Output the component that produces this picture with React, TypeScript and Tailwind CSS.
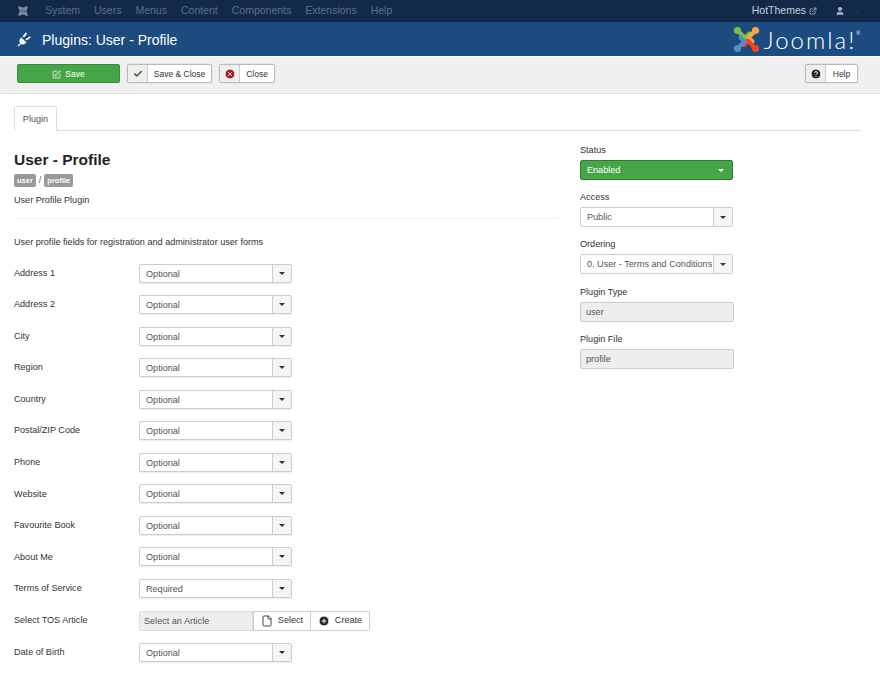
import { ChevronDown, ExternalLink, User, SquarePen, Check, CircleX, CircleHelp, File, CirclePlus } from 'lucide-react';

const NAV = ['System', 'Users', 'Menus', 'Content', 'Components', 'Extensions', 'Help'];

const FIELDS = [
  ['Address 1', 'Optional'],
  ['Address 2', 'Optional'],
  ['City', 'Optional'],
  ['Region', 'Optional'],
  ['Country', 'Optional'],
  ['Postal/ZIP Code', 'Optional'],
  ['Phone', 'Optional'],
  ['Website', 'Optional'],
  ['Favourite Book', 'Optional'],
  ['About Me', 'Optional'],
  ['Terms of Service', 'Required'],
];

function Caret({ className = 'border-t-[#333]' }: { className?: string }) {
  return <span className={`w-0 h-0 border-x-[3px] border-x-transparent border-t-[3px] ${className}`} />;
}

function JoomlaMark() {
  return (
    <svg width="27" height="27" viewBox="0 0 27 27" fill="none" strokeWidth="4.2" strokeLinecap="round" strokeLinejoin="round">
      <path d="M4.5 4.5 L12 12 L16.5 7.5" stroke="#7ac143" />
      <path d="M22.5 4.5 L15.5 11.5 L19.5 15.5" stroke="#f9a541" />
      <path d="M22.5 22.5 L15 15 L11 19" stroke="#f44321" />
      <path d="M4.5 22.5 L11.5 15.5 L7.5 11.5" stroke="#5091cd" />
      <circle cx="4.5" cy="4.5" r="3.6" fill="#7ac143" />
      <circle cx="22.5" cy="4.5" r="3.6" fill="#f9a541" />
      <circle cx="22.5" cy="22.5" r="3.6" fill="#f44321" />
      <circle cx="4.5" cy="22.5" r="3.6" fill="#5091cd" />
    </svg>
  );
}

function JoomlaSmall() {
  return (
    <svg width="12" height="12" viewBox="0 0 27 27" fill="none" stroke="#7f8da5" strokeWidth="3.6" strokeLinecap="round" strokeLinejoin="round">
      <path d="M4.5 4.5 L13.5 8 L22.5 4.5 L19 13.5 L22.5 22.5 L13.5 19 L4.5 22.5 L8 13.5 Z" />
      <path d="M8 8 L19 19 M19 8 L8 19" />
    </svg>
  );
}

function PlugIcon() {
  return (
    <svg width="15" height="16" viewBox="0 0 15 16" fill="white">
      <path d="M0.6 14.6 L3 12.2 C1.9 10.2 2.4 8.6 3.6 7.2 L4.4 6.4 L9.4 11.4 L8.6 12.2 C7 13.6 5.4 13.9 3.9 13.1 L1.5 15.5 Z" />
      <path d="M5.6 5.4 L8.8 1.2 L10.2 2.4 L7.2 6.6 Z M8.4 8.2 L12.8 5.2 L13.8 6.6 L9.6 9.6 Z" />
    </svg>
  );
}

function ToolButton({ icon, label, iconWidth, width }: { icon: React.ReactNode; label: string; iconWidth: string; width: string }) {
  return (
    <button className={`flex h-[19px] ${width} items-stretch rounded-[2px] border border-[#bbb] bg-white text-[8.5px] text-[#333] shadow-[0_0_0_0.5px_#ddd]`}>
      <span className={`flex ${iconWidth} items-center justify-center border-r border-[#ccc] bg-[#eee]`}>{icon}</span>
      <span className="flex flex-1 items-center justify-center pt-[1px]">{label}</span>
    </button>
  );
}

function SelectBox({ value }: { value: string }) {
  return (
    <div className="flex h-[19px] w-[153px] items-stretch rounded-[2px] border border-[#ccc] bg-white shadow-[0_1px_1px_rgba(0,0,0,0.08)]">
      <span className="flex-1 pl-[6px] text-[9.1px] leading-[18px] text-[#555]">{value}</span>
      <span className="flex w-[19px] items-center justify-center border-l border-[#ccc] bg-[#f5f5f5]">
        <Caret />
      </span>
    </div>
  );
}

function SideField({ label, children }: { label: string; children: React.ReactNode }) {
  return (
    <div>
      <p className="mb-[4px] text-[9.1px] leading-[12px] text-[#333]">{label}</p>
      {children}
    </div>
  );
}

function SideSelect({ value }: { value: string }) {
  return (
    <div className="flex h-[20px] w-[153px] items-stretch rounded-[2px] border border-[#ccc] bg-white">
      <span className="flex-1 overflow-hidden whitespace-nowrap pl-[6px] text-[9.1px] leading-[18px] text-[#555]">{value}</span>
      <span className="flex w-[19px] shrink-0 items-center justify-center border-l border-[#ccc] bg-[#f5f5f5]">
        <Caret />
      </span>
    </div>
  );
}

function ReadOnly({ value }: { value: string }) {
  return (
    <div className="h-[20px] w-[154px] rounded-[2px] border border-[#ccc] bg-[#eee] pl-[5px] text-[9.1px] leading-[18px] text-[#555]">
      {value}
    </div>
  );
}

export default function App() {
  return (
    <div className="h-[682px] w-[880px] overflow-hidden bg-white font-['Liberation_Sans',sans-serif]">
      <div className="flex h-[22px] items-center justify-between bg-[#13294a] pl-[17px] pr-[19px] text-[10.5px]">
        <div className="flex items-center">
          <JoomlaSmall />
          <div className="ml-[16px] flex gap-[14px] text-[#5c6f8e]">
            {NAV.map((n) => (
              <span key={n}>{n}</span>
            ))}
          </div>
        </div>
        <div className="flex items-center">
          <span className="text-[#c9d0dc]">HotThemes</span>
          <ExternalLink size={8} className="ml-[3px] text-[#c9d0dc]" />
          <User size={10} fill="#a9b4c4" className="ml-[18px] text-[#a9b4c4]" />
          <ChevronDown size={8} className="ml-[8px] text-[#2e4468]" />
        </div>
      </div>

      <div className="flex h-[35px] items-center justify-between border-b border-[#fff] bg-[#1c4b80] pl-[17px] pr-[20px]">
        <div className="flex items-center gap-[10px]">
          <PlugIcon />
          <h1 className="pt-[3px] text-[14px] text-white">Plugins: User - Profile</h1>
        </div>
        <div className="flex items-center gap-[4px] pt-[1px]">
          <JoomlaMark />
          <span className="font-['Lato',sans-serif] text-[24px] font-light leading-none tracking-[2px] text-white">Joomla!</span>
          <span className="-ml-[4px] mb-[12px] text-[5px] leading-none text-white">®</span>
        </div>
      </div>

      <div className="flex h-[37px] items-center justify-between border-b border-[#e2e2e2] bg-[#f0f0f0] pb-[3px] pl-[17px] pr-[22px]">
        <div className="flex items-center gap-[7px]">
          <button className="flex h-[19px] w-[103px] items-center justify-center gap-[4px] rounded-[2px] border border-[#3b8a3e] bg-[#46a546] pt-[1px] text-[8.5px] text-white">
            <SquarePen size={9} />
            Save
          </button>
          <ToolButton icon={<Check size={10} strokeWidth={3.5} className="text-[#1e6b23]" />} label="Save & Close" iconWidth="w-[20px]" width="w-[85px]" />
          <ToolButton icon={<CircleX size={12} fill="#a51f18" className="text-white" />} label="Close" iconWidth="w-[20px]" width="w-[56px]" />
        </div>
        <ToolButton icon={<CircleHelp size={12} fill="#222" className="text-white" />} label="Help" iconWidth="w-[20px]" width="w-[53px]" />
      </div>

      <div className="px-[14px] pt-[12px]">
        <div className="mr-[5px] border-b border-[#ddd]">
          <div className="-mb-px h-[25px] w-[43px] rounded-t-[2px] border border-[#ddd] border-b-white bg-white text-center text-[9.1px] leading-[25px] text-[#555]">
            Plugin
          </div>
        </div>

        <div className="flex">
          <div className="w-[545px]">
            <h2 className="mt-[20px] text-[15.5px] font-bold leading-[18px] text-[#222]">User - Profile</h2>
            <div className="mt-[5px] flex items-center gap-[3px] text-[9px] text-[#555]">
              <span className="rounded-[2px] bg-[#999] px-[3px] text-[7.5px] font-bold leading-[13px] text-white">user</span>
              /
              <span className="rounded-[2px] bg-[#999] px-[3px] text-[7.5px] font-bold leading-[13px] text-white">profile</span>
            </div>
            <p className="mt-[6px] text-[9.1px] leading-[12px] text-[#333]">User Profile Plugin</p>
            <div className="mt-[12px] border-t border-[#eee]" />
            <p className="mt-[17px] text-[9.1px] leading-[12px] text-[#333]">User profile fields for registration and administrator user forms</p>

            <div className="mt-[16px] flex flex-col gap-[12.55px]">
              {FIELDS.map(([label, value]) => (
                <div key={label} className="flex items-center">
                  <span className="w-[125px] pt-[1px] text-[9.1px] text-[#333]">{label}</span>
                  <SelectBox value={value} />
                </div>
              ))}
              <div className="flex items-center">
                <span className="w-[125px] pt-[1px] text-[9.1px] text-[#333]">Select TOS Article</span>
                <div className="flex h-[20px] items-stretch text-[9.1px] text-[#555]">
                  <span className="w-[114px] rounded-l-[2px] border border-[#ddd] bg-[#eee] pl-[4px] leading-[18px]">Select an Article</span>
                  <span className="flex w-[58px] items-center justify-center gap-[5px] border border-[#ccc] bg-white text-[#333]">
                    <File size={12} className="text-[#444]" />
                    <span className="pt-[1px]">Select</span>
                  </span>
                  <span className="flex w-[59px] items-center justify-center gap-[5px] rounded-r-[2px] border border-l-0 border-[#ccc] bg-white text-[#333]">
                    <CirclePlus size={12} fill="#222" className="text-white" />
                    <span className="pt-[1px]">Create</span>
                  </span>
                </div>
              </div>
              <div className="flex items-center">
                <span className="w-[125px] pt-[1px] text-[9.1px] text-[#333]">Date of Birth</span>
                <SelectBox value="Optional" />
              </div>
            </div>
          </div>

          <div className="ml-[21px] mt-[13px] flex flex-col gap-[11.2px]">
            <SideField label="Status">
              <div className="flex h-[20px] w-[153px] items-center justify-between rounded-[2px] border border-[#2f7d32] bg-[#46a546] pl-[6px] pr-[8px] text-[9.1px] text-white">
                <span className="pt-[1px]">Enabled</span>
                <Caret className="border-t-white" />
              </div>
            </SideField>
            <SideField label="Access">
              <SideSelect value="Public" />
            </SideField>
            <SideField label="Ordering">
              <SideSelect value="0. User - Terms and Conditions" />
            </SideField>
            <SideField label="Plugin Type">
              <ReadOnly value="user" />
            </SideField>
            <SideField label="Plugin File">
              <ReadOnly value="profile" />
            </SideField>
          </div>
        </div>
      </div>
    </div>
  );
}
